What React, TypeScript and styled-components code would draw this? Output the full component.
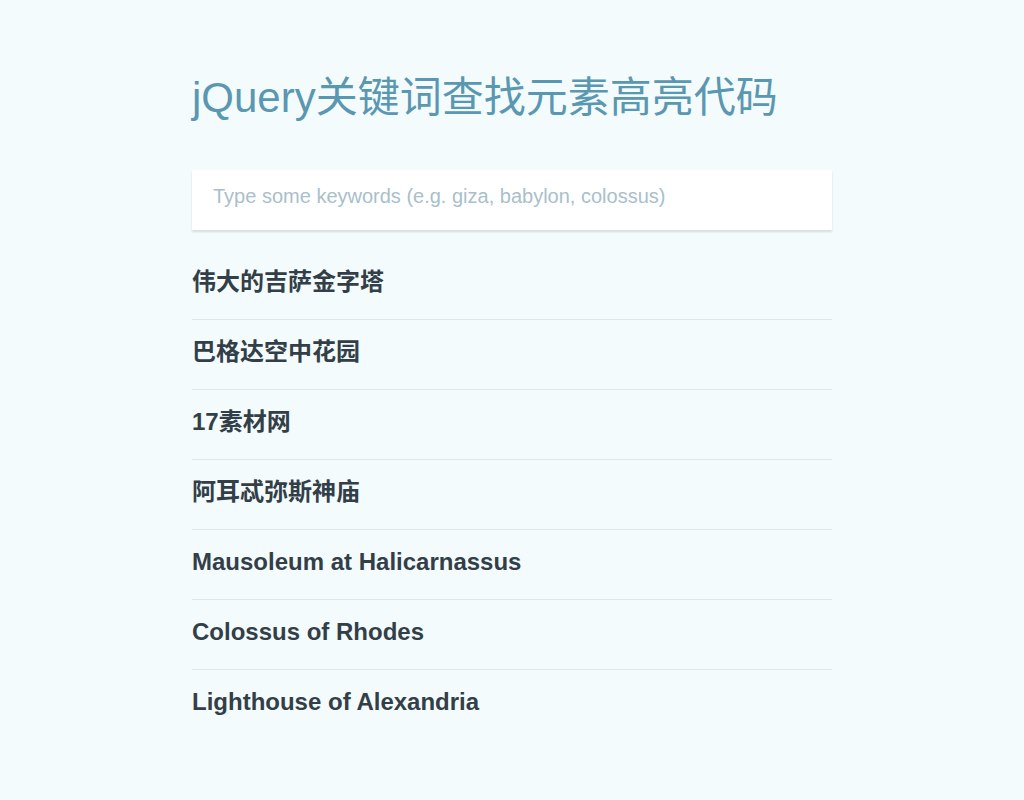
import styled, { createGlobalStyle } from 'styled-components';

const ITEMS = [
  '伟大的吉萨金字塔',
  '巴格达空中花园',
  '17素材网',
  '阿耳忒弥斯神庙',
  'Mausoleum at Halicarnassus',
  'Colossus of Rhodes',
  'Lighthouse of Alexandria',
];

const GlobalStyle = createGlobalStyle`
  html, body {
    margin: 0;
    padding: 0;
    background: #f4fbfd;
    font-family: "Liberation Sans", Arial, "Noto Sans CJK SC", sans-serif;
  }
`;

const Page = styled.div`
  width: 640px;
  margin: 0 auto;
  padding-top: 74px;
`;

const Title = styled.h1`
  margin: 0 0 48px;
  font-size: 42px;
  line-height: 48px;
  font-weight: 400;
  color: #5a98b2;
`;

const Search = styled.input`
  display: block;
  box-sizing: border-box;
  width: 100%;
  height: 60px;
  padding: 14px 21px 22px;
  border: none;
  outline: none;
  background: #fff;
  box-shadow: 0 2px 2px rgba(0, 0, 0, 0.12);
  font-family: inherit;
  font-size: 20px;
  line-height: 24px;
  color: #2f3e46;

  &::placeholder {
    color: #a9bfcb;
  }
`;

const List = styled.ul`
  list-style: none;
  margin: 20px 0 0;
  padding: 0;
`;

const Item = styled.li`
  padding: 17px 0 22px;
  font-size: 24px;
  line-height: 30px;
  font-weight: 700;
  color: #333f48;
  border-bottom: 1px solid #dde8ec;

  &:last-child {
    border-bottom: none;
  }
`;

export default function App() {
  return (
    <>
      <GlobalStyle />
      <Page>
        <Title>jQuery关键词查找元素高亮代码</Title>
        <Search placeholder="Type some keywords (e.g. giza, babylon, colossus)" />
        <List>
          {ITEMS.map((name) => (
            <Item key={name}>{name}</Item>
          ))}
        </List>
      </Page>
    </>
  );
}
